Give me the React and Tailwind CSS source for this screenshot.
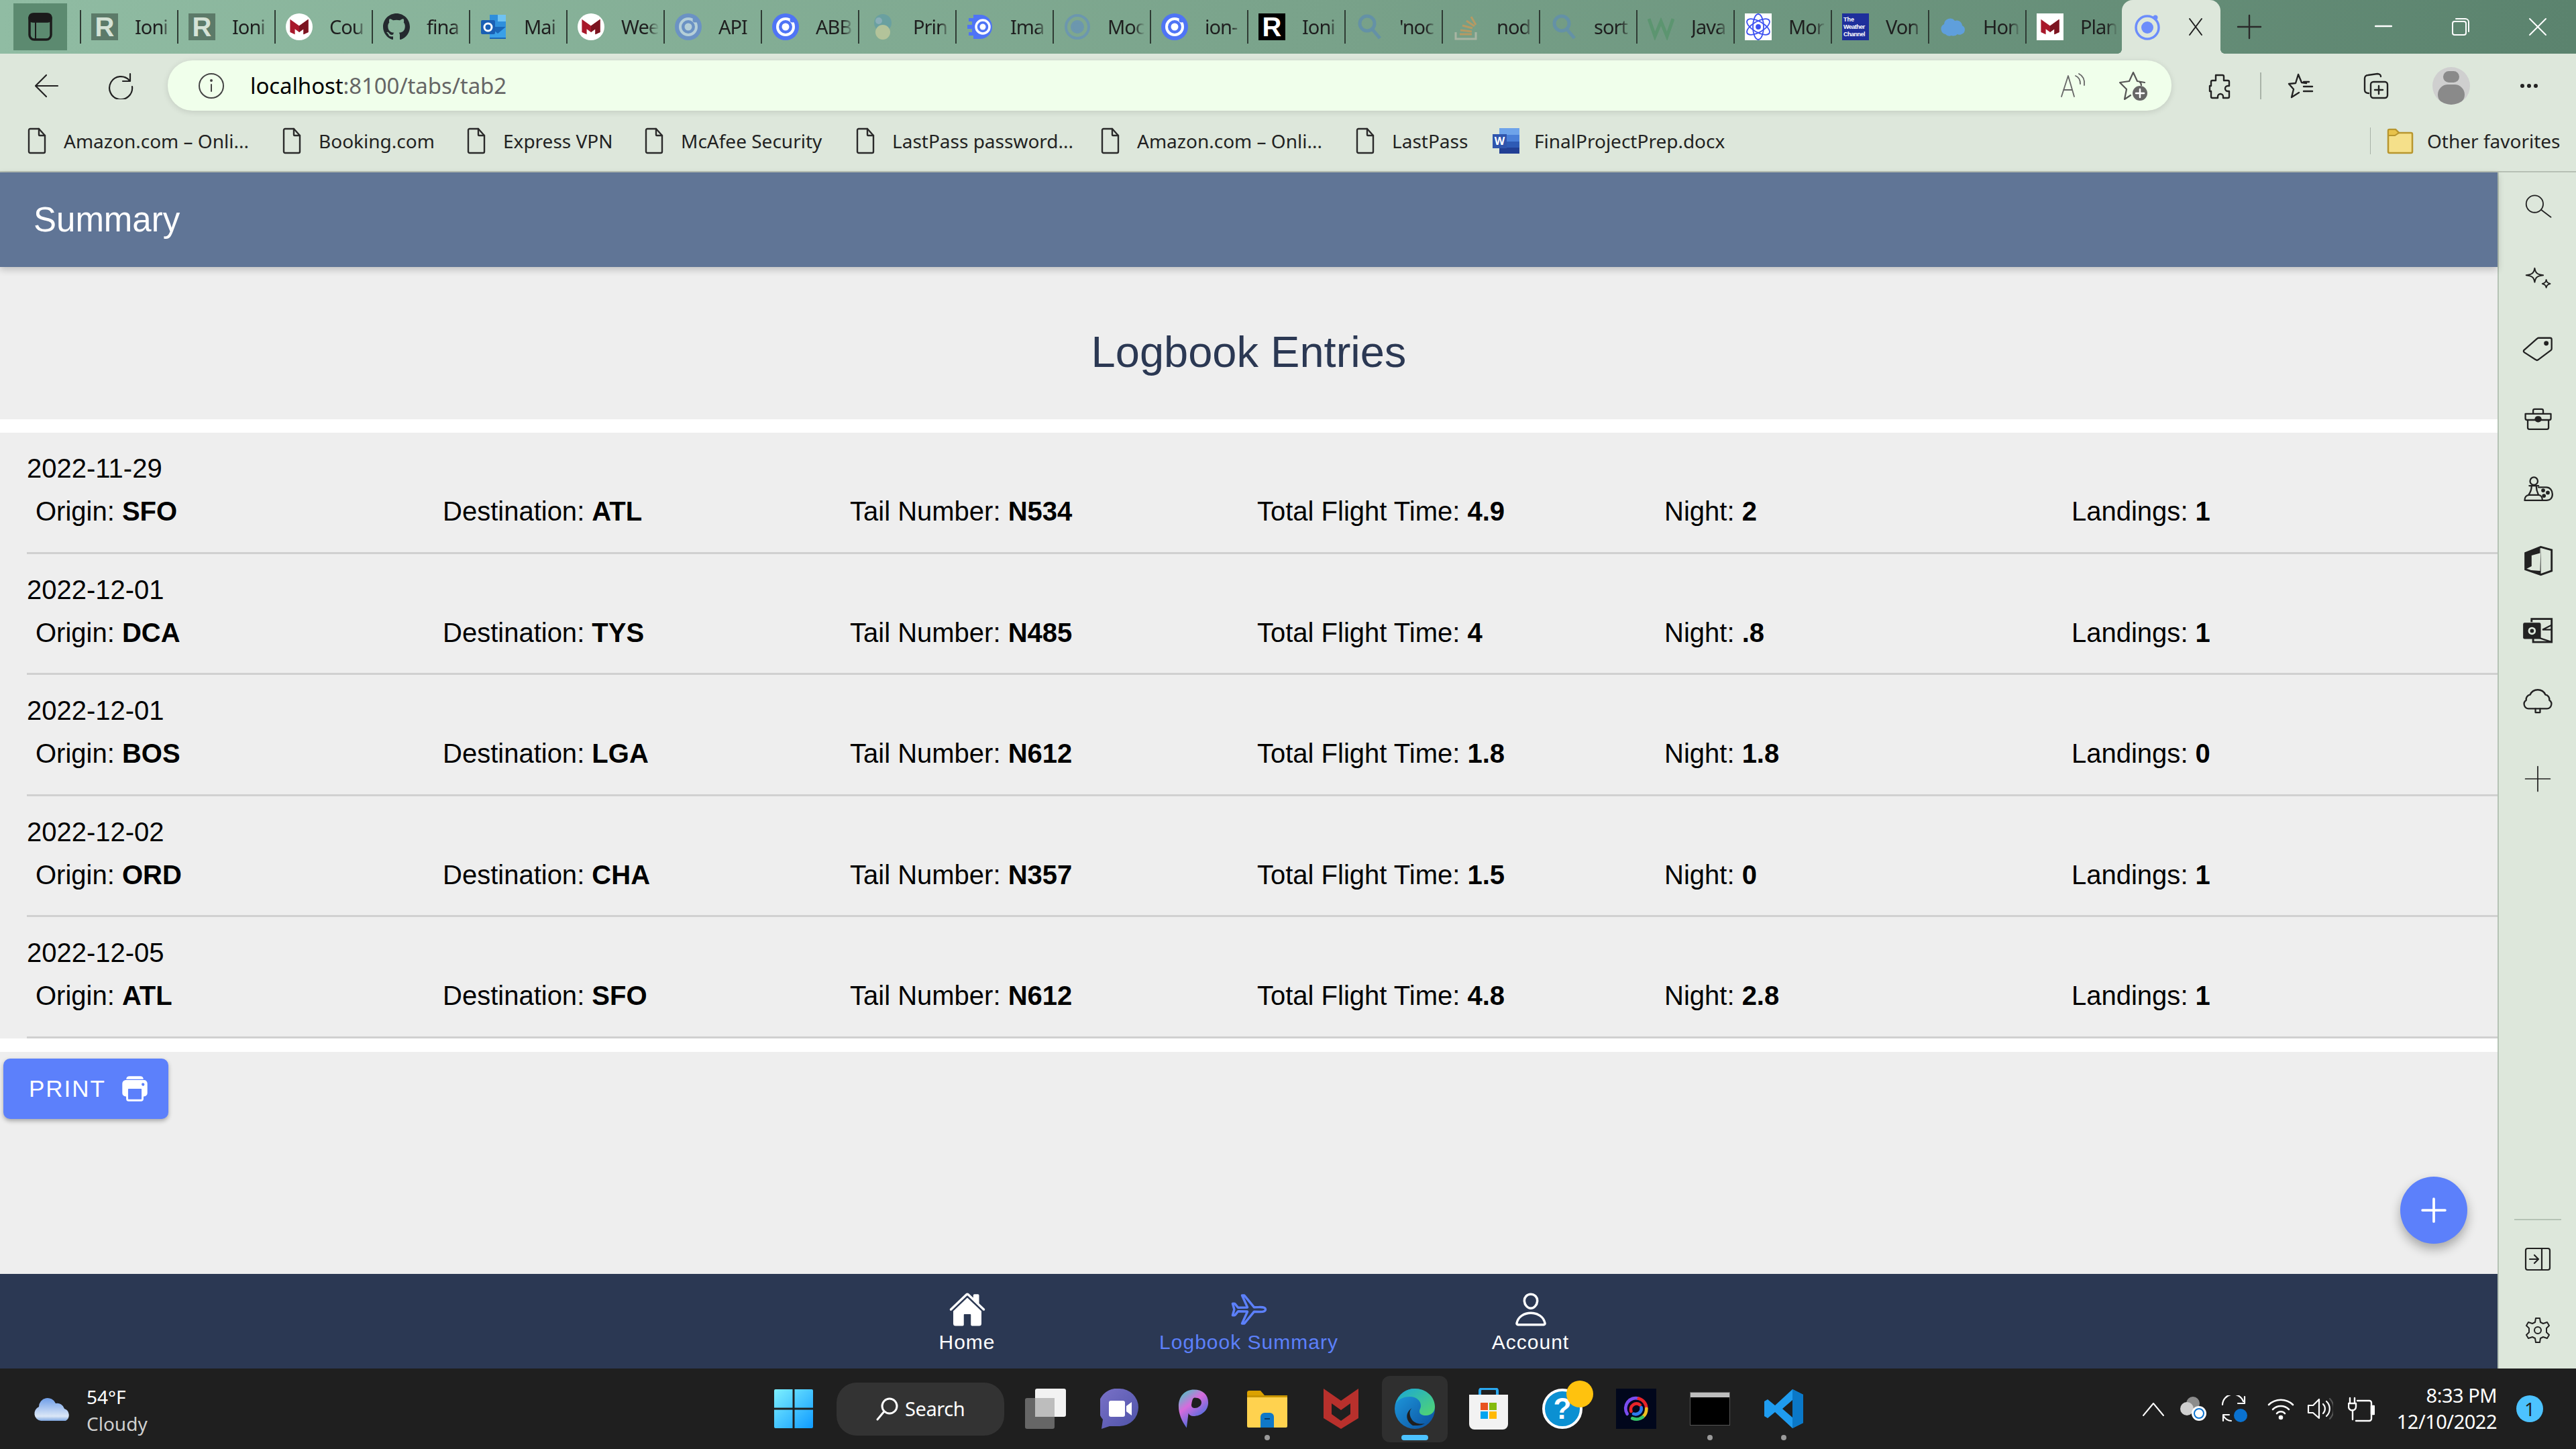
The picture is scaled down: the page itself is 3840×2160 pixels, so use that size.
import React from 'react';
import { IoHome, IoAirplaneOutline, IoPersonOutline, IoPrint, IoAdd } from 'react-icons/io5';

const S = ({ children, className = 'w-10 h-10', sw = 2, vb = '0 0 40 40', stroke = 'currentColor' }) => (
  <svg viewBox={vb} className={className} fill="none" stroke={stroke} strokeWidth={sw} strokeLinecap="round" strokeLinejoin="round">{children}</svg>
);

const RFav = ({ dark }) => (
  <div className={dark ? 'w-10 h-10 bg-black flex items-center justify-center text-white font-black text-[40px] leading-none font-["Liberation_Sans"]' : 'w-10 h-10 bg-[#5c7a69] flex items-center justify-center text-[#d5e2d6] font-black text-[40px] leading-none font-["Liberation_Sans"]'}>R</div>
);
const McAfeeFav = ({ square }) => (
  <div className={square ? 'w-10 h-10 bg-white flex items-center justify-center' : 'w-10 h-10 rounded-full bg-white flex items-center justify-center'}>
    <svg viewBox="0 0 40 40" className="w-8 h-8"><polygon points="3,6 20,18 37,6 37,30 28,34 28,24 20,30 12,24 12,34 3,30" fill="#a8182a" /><polygon points="20,18 37,6 37,30 28,34 28,24 20,30" fill="#7b1420" /></svg>
  </div>
);
const Github = () => (
  <svg viewBox="0 0 16 16" className="w-10 h-10" fill="#24292e"><path d="M8 0C3.58 0 0 3.58 0 8c0 3.54 2.29 6.53 5.47 7.59.4.07.55-.17.55-.38 0-.19-.01-.82-.01-1.49-2.01.37-2.53-.49-2.69-.94-.09-.23-.48-.94-.82-1.13-.28-.15-.68-.52-.01-.53.63-.01 1.08.58 1.23.82.72 1.21 1.87.87 2.33.66.07-.52.28-.87.51-1.07-1.78-.2-3.64-.89-3.64-3.95 0-.87.31-1.59.82-2.15-.08-.2-.36-1.02.08-2.12 0 0 .67-.21 2.2.82.64-.18 1.32-.27 2-.27s1.36.09 2 .27c1.53-1.04 2.2-.82 2.2-.82.44 1.1.16 1.92.08 2.12.51.56.82 1.27.82 2.15 0 3.07-1.87 3.75-3.65 3.95.29.25.54.73.54 1.48 0 1.07-.01 1.93-.01 2.2 0 .21.15.46.55.38A8.01 8.01 0 0 0 16 8c0-4.42-3.58-8-8-8z" /></svg>
);
const OutlookFav = () => (
  <svg viewBox="0 0 40 40" className="w-10 h-10"><rect x="14" y="2" width="24" height="20" fill="#2f8fdc" /><rect x="26" y="2" width="12" height="10" fill="#6fc2f2" /><path d="M14 20 38 20V38H14Z" fill="#1a66b8" /><path d="M14 20 26 30 38 20V36H14Z" fill="#3aa0e8" /><rect x="1" y="10" width="21" height="21" rx="2" fill="#1a5fb4" /><circle cx="11.5" cy="20.5" r="5.5" fill="none" stroke="#fff" strokeWidth="3" /></svg>
);
const Ring = ({ c = '#4f74f5', ring = '#fff' }) => (
  <svg viewBox="0 0 40 40" className="w-10 h-10"><circle cx="20" cy="20" r="20" fill={c} /><circle cx="20" cy="20" r="12" fill="none" stroke={ring} strokeWidth="4" /><circle cx="20" cy="20" r="5.5" fill={ring} /><circle cx="30" cy="10" r="3.5" fill={c} /></svg>
);
const Pic = () => (
  <svg viewBox="0 0 40 40" className="w-10 h-10"><circle cx="20" cy="14" r="13" fill="#6aa0a0" /><circle cx="20" cy="28" r="11" fill="#b3c39a" /><circle cx="14" cy="11" r="5" fill="#8aaeb8" /></svg>
);
const Speed = () => (
  <svg viewBox="0 0 40 40" className="w-10 h-10"><path d="M10 2H20A18 18 0 0 1 20 38H10V33H3V28H8V23H1V17H8V12H3V7H10Z" fill="#4f74f5" /><circle cx="24" cy="20" r="10" fill="none" stroke="#fff" strokeWidth="3.5" /><circle cx="24" cy="20" r="4.5" fill="#fff" /></svg>
);
const Ghost = () => (
  <svg viewBox="0 0 40 40" className="w-10 h-10" fill="none" stroke="#6c97ae" strokeWidth="4"><circle cx="20" cy="20" r="17" /><circle cx="20" cy="20" r="8" fill="#6c97ae" /></svg>
);
const SearchFav = () => (
  <svg viewBox="0 0 40 40" className="w-10 h-10" fill="none" stroke="#6491a6" strokeWidth="5"><circle cx="17" cy="15" r="11" /><path d="M25 24 36 37" /></svg>
);
const SO = () => (
  <svg viewBox="0 0 40 40" className="w-10 h-10" fill="none" stroke="#b69a63" strokeWidth="3"><path d="M4 28V38H34V28" stroke="#a9b5a3" /><path d="M10 31H28M11 25 28 27M14 18 29 22M20 11 32 19M27 5 34 17" /></svg>
);
const Wiki = () => (
  <svg viewBox="0 0 40 40" className="w-10 h-10" fill="none" stroke="#5c9570" strokeWidth="5"><path d="M2 8 11 34 20 12 29 34 38 8" /></svg>
);
const Atom = () => (
  <div className="w-10 h-10 bg-white flex items-center justify-center">
    <svg viewBox="0 0 40 40" className="w-10 h-10" fill="none" stroke="#3c50f0" strokeWidth="1.8"><ellipse cx="20" cy="20" rx="8" ry="19" /><ellipse cx="20" cy="20" rx="8" ry="19" transform="rotate(60 20 20)" /><ellipse cx="20" cy="20" rx="8" ry="19" transform="rotate(120 20 20)" /><circle cx="20" cy="20" r="3" fill="#3c50f0" /></svg>
  </div>
);
const Weather = () => (
  <div className="w-10 h-10 bg-[#1f2f9c] flex flex-col justify-center px-[2px] text-white text-[9px] leading-[11px] font-['Liberation_Sans'] font-bold overflow-hidden"><span>The</span><span className="tracking-[-0.5px]">Weather</span><span className="tracking-[-0.5px]">Channel</span></div>
);
const Cloud = () => (
  <svg viewBox="0 0 40 40" className="w-10 h-10"><path d="M9 31a8 8 0 0 1-2-15 9 9 0 0 1 16-5 8 8 0 0 1 11 7 7 7 0 0 1-1 13 6 6 0 0 1-6 0 9 9 0 0 1-9 2 8 8 0 0 1-9-2Z" fill="#5f9fdc" /></svg>
);

const tabs = [
  ['Ioni', <RFav />], ['Ioni', <RFav />], ['Cou', <McAfeeFav />], ['fina', <Github />], ['Mai', <OutlookFav />], ['Wee', <McAfeeFav />],
  ['API', <Ring c="#6b92c4" ring="#b5cfd8" />], ['ABB', <Ring />], ['Prin', <Pic />], ['Ima', <Speed />], ['Moc', <Ghost />], ['ion-', <Ring />],
  ['Ioni', <RFav dark />], ["'noc", <SearchFav />], ['nod', <SO />], ['sort', <SearchFav />], ['Java', <Wiki />], ['Mor', <Atom />],
  ['Von', <Weather />], ['Hon', <Cloud />], ['Plan', <McAfeeFav square />],
];

const FileIcon = () => (
  <S className="w-[30px] h-10 text-[#2a2a2a]" vb="0 0 30 40" sw={2.4}><path d="M3 4a2 2 0 0 1 2-2h13l9 10v24a2 2 0 0 1-2 2H5a2 2 0 0 1-2-2Z" /><path d="M18 2v9a1 1 0 0 0 1 1h8" /></S>
);

const bookmarks = [
  ['Amazon.com – Onli...', 'w-[380px]', <FileIcon />],
  ['Booking.com', 'w-[275px]', <FileIcon />],
  ['Express VPN', 'w-[265px]', <FileIcon />],
  ['McAfee Security', 'w-[315px]', <FileIcon />],
  ['LastPass password...', 'w-[365px]', <FileIcon />],
  ['Amazon.com – Onli...', 'w-[380px]', <FileIcon />],
  ['LastPass', 'w-[205px]', <FileIcon />],
  ['FinalProjectPrep.docx', 'w-[400px]', (
    <div className="relative w-10 h-10 shrink-0 -mr-[3px]">
      <svg viewBox="0 0 40 40" className="w-10 h-10"><rect x="10" y="1" width="30" height="10" fill="#6ea3ea" /><rect x="10" y="11" width="30" height="10" fill="#4a7fd8" /><rect x="10" y="21" width="30" height="9" fill="#2e5bb5" /><rect x="10" y="30" width="30" height="9" fill="#213f94" /></svg>
      <span className="absolute left-0 top-[10px] w-[21px] h-[21px] bg-[#2f55ad] text-white text-[16px] leading-[21px] text-center font-bold">W</span>
    </div>
  )],
];

const rows = [
  ['2022-11-29', 'SFO', 'ATL', 'N534', '4.9', '2', '1'],
  ['2022-12-01', 'DCA', 'TYS', 'N485', '4', '.8', '1'],
  ['2022-12-01', 'BOS', 'LGA', 'N612', '1.8', '1.8', '0'],
  ['2022-12-02', 'ORD', 'CHA', 'N357', '1.5', '0', '1'],
  ['2022-12-05', 'ATL', 'SFO', 'N612', '4.8', '2.8', '1'],
];
const labels = ['Origin', 'Destination', 'Tail Number', 'Total Flight Time', 'Night', 'Landings'];

const side = [
  <S sw={1.6}><circle cx="16" cy="14" r="11" /><path d="M25 22 37 31" /></S>,
  <S sw={1.8}><path d="M16 6c1 6 3 8 11 9-8 1-10 3-11 9-1-6-3-8-11-9 8-1 10-3 11-9Z" /><path d="M31 21c.5 3 1.500 4 5 5-3.500 1-4.500 2-5 5-.5-3-1.500-4-5-5 3.500-1 4.500-2 5-5Z" /></S>,
  <S sw={2}><path d="M2 21 19 6a3 3 0 0 1 2-1h15a2 2 0 0 1 2 2v12a3 3 0 0 1-1 2L21 33a3 3 0 0 1-4 0L3 24a2 2 0 0 1-1-3Z" /><circle cx="31" cy="12" r="2" fill="currentColor" /></S>,
  <S sw={2}><path d="M4 12h33v6a2 2 0 0 1-2 2H6a2 2 0 0 1-2-2ZM7 20v10a2 2 0 0 0 2 2h23a2 2 0 0 0 2-2V20M14 12V8a2 2 0 0 1 2-2h9a2 2 0 0 1 2 2v4" /><rect x="17" y="16" width="7" height="6" rx="3" fill="currentColor" /></S>,
  <S sw={2}><circle cx="15" cy="8" r="5" /><path d="M9 14h12M12 14c0 5-1 8-4 12M18 14c0 5 1 8 3 12M3 33c0-4 2-7 6-7h12c3 0 5 3 5 7Z" /><path d="M21 16h10c5 0 8 4 8 9s-3 8-8 8h-5" /><circle cx="27" cy="20" r="1.500" fill="currentColor" /><circle cx="33" cy="23" r="1.500" fill="currentColor" /><circle cx="28" cy="27" r="1.500" fill="currentColor" /></S>,
  <svg viewBox="0 0 40 40" className="w-10 h-10"><path d="M24 2 38 6V33L24 38 4 31V10Z" fill="none" stroke="#222" strokeWidth="2.500" /><path d="M23 3 4 10V31L12 27V13L23 10Z" fill="#222" /><path d="M24 2V38L8 32 23 33Z" fill="#222" /><rect x="26" y="7" width="9" height="24" fill="#dde7db" /></svg>,
  <svg viewBox="0 0 40 40" className="w-10 h-10"><path d="M12 8V4H38V34H14V26" fill="none" stroke="#222" strokeWidth="2.500" /><path d="M14 26 38 34M26 18 38 12M26 18H38" fill="none" stroke="#222" strokeWidth="2" /><rect x="1" y="9" width="23" height="21" rx="2" fill="#222" /><circle cx="12.500" cy="19.500" r="5" fill="#dde7db" /><circle cx="12.500" cy="19.500" r="2.500" fill="#222" /></svg>,
  <S sw={2}><path d="M12 29H8a6 6 0 0 1-3-11 6 6 0 0 1 5-7 11 11 0 0 1 20 0 6 6 0 0 1 5 7 6 6 0 0 1-3 11Z" /><path d="M17 29v5h6v-5" /></S>,
];

const TaskIcon = ({ children, active, dot }) => (
  <div className={active ? 'relative w-[98px] h-[99px] mx-[6px] flex items-center justify-center rounded-xl bg-[#2f2f2f]' : 'relative w-[98px] h-[99px] mx-[6px] flex items-center justify-center'}>
    {children}
    {active && <span className="absolute left-[29px] bottom-[3px] w-10 h-2 rounded-full bg-[#4cc2ff]" />}
    {dot && <span className="absolute left-[45px] bottom-[3px] w-2 h-2 rounded-full bg-[#9a9a9a]" />}
  </div>
);

const chromeFont = "font-['Noto_Sans']";

export default function App() {
  return (
    <div className="w-[3840px] h-[2160px] flex flex-col overflow-hidden bg-[#dde7db] font-['Liberation_Sans',sans-serif]">
      {/* tab strip */}
      <div className={"h-20 flex items-center shrink-0 bg-gradient-to-r from-[#90bca3] via-[#7aa38b] to-[#5b836e] " + chromeFont}>
        <div className="ml-5 w-20 h-[70px] flex items-center justify-center bg-[#5c8a70] text-[#1b1b1b]">
          <S className="w-10 h-[44px]" vb="0 0 40 44" sw={3.500}><rect x="4" y="3" width="32" height="38" rx="7" /><rect x="4" y="3" width="32" height="11" rx="5" fill="currentColor" /><path d="M13 14v26" strokeWidth="2" /></S>
        </div>
        <div className="flex ml-[19px]">
          {tabs.map(([t, icon], i) => (
            <div key={i} className="w-[145px] h-20 flex items-center shrink-0">
              <span className="w-[2px] h-[50px] bg-[#2f3b34] shrink-0" />
              <div className="ml-[15px] w-10 h-10 shrink-0 flex">{icon}</div>
              <div className="ml-[25px] w-[56px] whitespace-nowrap text-[29px] text-[#1f1f1f] tracking-[-1px] [mask-image:linear-gradient(90deg,#000_70%,transparent)]">{t}</div>
            </div>
          ))}
        </div>
        <div className="relative w-[147px] h-20 -ml-px bg-[#dde7db] rounded-t-2xl flex items-center shrink-0">
          <span className="absolute -left-[6px] bottom-0 w-[6px] h-[6px] bg-[radial-gradient(circle_at_0_0,transparent_5.500px,#dde7db_6px)]" />
          <span className="absolute -right-[6px] bottom-0 w-[6px] h-[6px] bg-[radial-gradient(circle_at_100%_0,transparent_5.500px,#dde7db_6px)]" />
          <svg viewBox="0 0 40 40" className="ml-[18px] w-10 h-10 shrink-0" fill="none"><circle cx="20" cy="21" r="17" stroke="#6c8dfb" strokeWidth="3.500" /><circle cx="20" cy="21" r="9" fill="#6c8dfb" /><circle cx="32" cy="6" r="3.500" fill="#6c8dfb" /></svg>
          <S className="ml-[41px] w-[22px] h-[28px] text-[#1f1f1f] shrink-0" vb="0 0 22 28" sw={2}><path d="M2 2 20 26M20 2 2 26" /></S>
        </div>
        <div className="w-[86px] flex justify-center text-[#2a2a2a]">
          <S className="w-[38px] h-[38px]" vb="0 0 38 38" sw={2.400}><path d="M19 2v34M2 19h34" /></S>
        </div>
        <div className="ml-auto flex text-white">
          <div className="w-[115px] flex justify-center"><S className="w-[26px] h-[26px]" vb="0 0 26 26" sw={2.400}><path d="M1 13h24" /></S></div>
          <div className="w-[115px] flex justify-center"><S className="w-[28px] h-[28px]" vb="0 0 28 28" sw={2}><rect x="2" y="6" width="20" height="20" rx="3" /><path d="M7 2h14a5 5 0 0 1 5 5v14" /></S></div>
          <div className="w-[115px] flex justify-center"><S className="w-[28px] h-[28px]" vb="0 0 28 28" sw={2}><path d="M2 2 26 26M26 2 2 26" /></S></div>
        </div>
      </div>

      {/* toolbar */}
      <div className={"h-[95px] flex items-center shrink-0 bg-[#dde7db] text-[#222] " + chromeFont}>
        <div className="ml-[15px] w-[110px] flex justify-center"><S sw={2.200}><path d="M36 20H4M19 4 3 20l16 16" /></S></div>
        <div className="w-[110px] flex justify-center"><S sw={2.200}><path d="M33 12A17 17 0 1 0 37 21" /><path d="M34 2v11H23" /></S></div>
        <div className="ml-[15px] w-[2987px] h-[75px] rounded-[37px] bg-[#f0ffeb] shadow-[0_2px_10px_rgba(0,0,0,0.12)] flex items-center pl-[45px] pr-[34px]">
          <S className="w-10 h-10 text-[#444]" sw={2}><circle cx="20" cy="20" r="18" /><path d="M20 18v10" /><circle cx="20" cy="12" r="1" fill="currentColor" /></S>
          <div className="ml-[38px] flex-1 text-[33px] text-[#666] tracking-[-0.1px]"><span className="text-black">localhost</span>:8100/tabs/tab2</div>
          <S className="w-10 h-10 text-[#666]" sw={1.800}><path d="M3 36 13 5l9 31M6 26h13M24 5c5 2 7 6 7 12M29 2c6 3 9 9 8 17" /></S>
          <S className="ml-[47px] w-[46px] h-[46px] text-[#555]" vb="0 0 46 46" sw={2.200}><path d="M35 22l-1-4-1 0M40 18l-11-2-6-13-6 13-14 2 10 10-3 15 9-6" /><circle cx="33" cy="34" r="11" fill="#666" stroke="none" /><path d="M33 28v12M27 34h12" stroke="#fff" strokeWidth="2.500" /></S>
        </div>
        <div className="ml-4 w-[112px] flex justify-center"><S sw={2.400}><path d="M14 4h10a2 2 0 0 1 2 2v6h6a2 2 0 0 1 2 2v6h-2a4 4 0 0 0 0 8h2v8a2 2 0 0 1-2 2h-7v-2a4 4 0 0 0-8 0v2H9a2 2 0 0 1-2-2v-8H5v-8h2v-6a2 2 0 0 1 2-2h5Z" /></S></div>
        <span className="ml-1 w-[2px] h-10 bg-[#a9b3a8]" />
        <div className="ml-1 w-[110px] flex justify-center"><S sw={2.400}><path d="M16 3l5 12 7 1M6 37l3-12-7-8 10-1 4-13M24 21h13M24 28h13M24 14h8M6 37l11-7" /></S></div>
        <div className="ml-px w-[110px] flex justify-center"><S sw={2.400}><path d="M10 31c-4 0-6-2-6-5V9c0-3 2-5 5-5l14-2c3 0 5 2 5 4" /><rect x="13" y="14" width="25" height="24" rx="4" /><path d="M25 20v12M19 26h12" /></S></div>
        <div className="ml-[3px] w-[110px] flex justify-center">
          <div className="w-14 h-14 rounded-full bg-[#cfcfcf] flex flex-col items-center overflow-hidden">
            <span className="mt-[6px] w-6 h-6 rounded-full bg-[#8a8a8a]" />
            <span className="mt-[3px] w-10 h-10 rounded-full bg-[#8a8a8a]" />
          </div>
        </div>
        <div className="ml-[6px] w-[110px] flex justify-center gap-[4px]"><span className="w-[6px] h-[6px] rounded-full bg-[#222]" /><span className="w-[6px] h-[6px] rounded-full bg-[#222]" /><span className="w-[6px] h-[6px] rounded-full bg-[#222]" /></div>
      </div>

      {/* bookmarks */}
      <div className={"h-[82px] flex items-center shrink-0 pb-[10px] pl-10 bg-[#dde7db] border-b-2 border-[#b7c0b5] text-[#222] " + chromeFont}>
        {bookmarks.map(([t, w, icon], i) => (
          <div key={i} className={w + ' flex items-center gap-[25px] shrink-0'}>
            {icon}
            <span className="text-[28px] whitespace-nowrap">{t}</span>
          </div>
        ))}
        <span className="ml-[908px] w-px h-10 bg-[#a9b3a8]" />
        <svg viewBox="0 0 40 40" className="ml-[24px] w-10 h-10"><path d="M2 5a2 2 0 0 1 2-2h9l5 5h18a2 2 0 0 1 2 2v26a2 2 0 0 1-2 2H4a2 2 0 0 1-2-2Z" fill="#f5e08a" stroke="#b8962e" strokeWidth="2.500" /><path d="M2 12V5a2 2 0 0 1 2-2h9l5 5-6 4Z" fill="#e8c24a" stroke="#b8962e" strokeWidth="2" /></svg>
        <span className="ml-5 text-[28px] whitespace-nowrap">Other favorites</span>
      </div>

      <div className="flex-1 flex min-h-0">
        <div className="w-[3723px] flex flex-col">
          {/* header */}
          <div className="h-[141px] shrink-0 bg-[#607596] flex items-center pl-[50px] pt-[2px] text-white text-[51px] shadow-[0_4px_10px_rgba(0,0,0,0.2)] relative z-10">Summary</div>
          {/* content */}
          <div className="relative flex-1 bg-[#eeeeee]">
            <div className="h-[227px] pt-[26px] flex items-center justify-center text-[65px] text-[#2b3853]">Logbook Entries</div>
            <div className="h-5 bg-white" />
            {rows.map((r, i) => (
              <div key={i} className="h-[180.6px] ml-10 border-b-[3px] border-[#d0d0d0] text-black text-[40px] leading-[46px] pt-[30px]">
                <div>{r[0]}</div>
                <div className="mt-[18px] grid grid-cols-6 w-[3642px]">
                  {labels.map((l, j) => (
                    <div key={l} className="pl-[13px]">{l}: <b>{r[j + 1]}</b></div>
                  ))}
                </div>
              </div>
            ))}
            <div className="h-5 bg-white" />
            <button className="mt-[10px] ml-[5px] w-[246px] h-[90px] rounded-[10px] bg-[#5c80fb] text-white flex items-center pl-[38px] gap-[20px] text-[35px] tracking-[2px] shadow-[0_3px_6px_rgba(0,0,0,0.3)]">
              PRINT<IoPrint className="w-[46px] h-[46px]" />
            </button>
            <div className="absolute left-[3578px] top-[1356px] w-[100px] h-[100px] rounded-full bg-[#5c80fb] text-white flex items-center justify-center shadow-[0_8px_16px_rgba(0,0,0,0.3)]">
              <IoAdd className="w-[60px] h-[60px]" />
            </div>
          </div>
          {/* tab bar */}
          <div className="h-[141px] shrink-0 bg-[#2b3853] flex justify-center text-white text-[30px] tracking-[1px]">
            {[['Home', <IoHome className="w-[56px] h-[56px]" />, 'text-white'], ['Logbook Summary', <IoAirplaneOutline className="w-[56px] h-[56px]" />, 'text-[#5c80fb]'], ['Account', <IoPersonOutline className="w-[56px] h-[56px]" />, 'text-white']].map(([t, ic, c]) => (
              <div key={t} className={'w-[420px] flex flex-col items-center pt-[25px] ' + c}>
                {ic}
                <span className="leading-[34px] mt-[4px]">{t}</span>
              </div>
            ))}
          </div>
        </div>
        {/* sidebar */}
        <div className="flex-1 border-l-2 border-[#b5c3b5] bg-[#dde7db] flex flex-col items-center text-[#222]">
          <div className="pt-[31px] flex flex-col items-center gap-[59px]">
            {side.map((ic, i) => <div key={i} className="w-[46px] h-[46px] [&>svg]:w-full [&>svg]:h-full">{ic}</div>)}
          </div>
          <div className="mt-[69px] w-[46px] h-[46px] [&>svg]:w-full [&>svg]:h-full"><S sw={1.500}><path d="M20 4v32M4 20h32" /></S></div>
          <div className="mt-auto w-[70px] h-[2px] bg-[#b5c3b5]" />
          <div className="mt-[38px] w-10 h-10"><S sw={2.200}><rect x="2" y="4" width="36" height="32" rx="3" /><path d="M26 4v32M8 20h12M15 14l6 6-6 6" /></S></div>
          <div className="mt-[66px] mb-[37px] w-10 h-10"><S sw={2}><circle cx="20" cy="20" r="5" /><path d="M17 2h6l1 6 4 2 6-2 3 5-4 4v6l4 4-3 5-6-2-4 2-1 6h-6l-1-6-4-2-6 2-3-5 4-4v-6L3 13l3-5 6 2 4-2Z" /></S></div>
        </div>
      </div>

      {/* taskbar */}
      <div className={"h-[120px] shrink-0 bg-[#1f1f1f] flex items-center text-white relative " + chromeFont}>
        <svg viewBox="0 0 60 40" className="ml-[48px] w-[62px] h-10 shrink-0"><defs><linearGradient id="cl" x1="0" y1="0" x2="0" y2="1"><stop offset="0" stopColor="#6f9ee8" /><stop offset="0.8" stopColor="#dbe7f7" /><stop offset="1" stopColor="#7ea6e0" /></linearGradient></defs><path d="M12 38a11 11 0 0 1-3-21 13 13 0 0 1 25-5 11 11 0 0 1 13 8 10 10 0 0 1 2 18Z" fill="url(#cl)" /></svg>
        <div className="ml-[19px] w-[100px] pt-[3px] flex flex-col shrink-0">
          <span className="text-[28px] leading-[40px]">54°F</span>
          <span className="text-[28px] leading-[40px] text-[#cfcfcf]">Cloudy</span>
        </div>
        <svg viewBox="0 0 58 58" className="ml-[925px] w-[58px] h-[58px] shrink-0"><defs><linearGradient id="w" x1="0" y1="0" x2="1" y2="1"><stop offset="0" stopColor="#7df0ff" /><stop offset="1" stopColor="#0f9bff" /></linearGradient></defs><path d="M0 2a2 2 0 0 1 2-2h25.500v27.500H0ZM30.500 0H56a2 2 0 0 1 2 2v25.500H30.500ZM0 30.500h27.500V58H2a2 2 0 0 1-2-2ZM30.500 30.500H58V56a2 2 0 0 1-2 2H30.500Z" fill="url(#w)" /></svg>
        <div className="ml-[35px] w-[250px] h-[79px] rounded-[30px] bg-[#333333] flex items-center pl-[58px] gap-[8px] shrink-0">
          <S className="w-[36px] h-[36px]" vb="0 0 36 36" sw={3}><circle cx="21" cy="14" r="11" /><path d="M13 22 3 34" /></S>
          <span className="text-[29px] tracking-[-0.4px]">Search</span>
        </div>
        <div className="ml-[7px] flex">
          <TaskIcon><svg viewBox="0 0 62 62" className="w-[62px] h-[62px]"><rect x="0" y="15" width="44" height="46" rx="3" fill="#666" /><rect x="15" y="1" width="46" height="42" rx="3" fill="#f2f2f2" /><rect x="15" y="15" width="29" height="28" fill="#bdbdbd" /></svg></TaskIcon>
          <TaskIcon><svg viewBox="0 0 58 60" className="w-[58px] h-[60px]"><defs><linearGradient id="mt" x1="0" y1="0" x2="1" y2="1"><stop offset="0" stopColor="#7a72c8" /><stop offset="1" stopColor="#4e52a8" /></linearGradient></defs><path d="M29 0a28 28 0 0 1 0 56H14L2 60l2-14A28 28 0 0 1 29 0Z" fill="url(#mt)" /><rect x="13" y="18" width="24" height="24" rx="3" fill="#fff" /><path d="M39 26l8-6v20l-8-6Z" fill="#fff" /></svg></TaskIcon>
          <TaskIcon><svg viewBox="0 0 50 64" className="w-[46px] h-[64px]"><defs><linearGradient id="pp" x1="0" y1="0" x2="0.6" y2="1"><stop offset="0" stopColor="#33d6c0" /><stop offset="0.45" stopColor="#d76bdc" /><stop offset="1" stopColor="#2a6fe0" /></linearGradient></defs><path d="M26 1c14 0 23 8 23 21S38 44 25 44c-4 0-7-2-8-5l-3 24C6 52 1 40 1 28 1 12 11 1 26 1Z" fill="url(#pp)" /><path d="M27 14c7 0 11 3 11 8s-5 9-11 9c-4 0-6-3-5-7 1-5 2-10 5-10Z" fill="#1f1f1f" /></svg></TaskIcon>
          <TaskIcon dot><svg viewBox="0 0 60 56" className="w-[60px] h-[56px]"><path d="M0 4a3 3 0 0 1 3-3h17l6 7v4H0Z" fill="#dba100" /><rect x="0" y="8" width="60" height="48" rx="2" fill="#ffd24f" /><rect x="0" y="8" width="60" height="3" fill="#c89400" /><path d="M20 40a6 6 0 0 1 6-6h8a6 6 0 0 1 6 6v16H20Z" fill="#0f78c8" /><rect x="26" y="42" width="8" height="2" fill="#073a66" /></svg></TaskIcon>
          <TaskIcon><svg viewBox="0 0 52 60" className="w-[52px] h-[60px]"><path d="M0 0 26 18 52 0V44L26 60 0 44ZM12 22V38L26 48 40 38V22L26 32Z" fill="#b8302c" fillRule="evenodd" /></svg></TaskIcon>
          <TaskIcon active><svg viewBox="0 0 60 60" className="w-[60px] h-[60px]"><defs><linearGradient id="e1" x1="0" y1="0" x2="1" y2="1"><stop offset="0" stopColor="#1aa7d8" /><stop offset="1" stopColor="#53d66e" /></linearGradient><linearGradient id="e2" x1="0" y1="0" x2="1" y2="1"><stop offset="0" stopColor="#1f9de0" /><stop offset="1" stopColor="#0b4f9e" /></linearGradient></defs><circle cx="30" cy="30" r="30" fill="url(#e2)" /><path d="M2 22C6 8 17 0 30 0c17 0 30 12 30 27 0 8-6 13-13 13-6 0-10-2-10-6 0-4 2-4 2-9 0-7-7-13-16-13C14 12 6 15 2 22Z" fill="url(#e1)" /><path d="M27 28c-5 3-6 10-2 17 3 6 12 9 20 7-3 2-7 3-12 3-6 0-6 0-6 0C16 48 15 35 27 28Z" fill="#1f1f1f" /></svg></TaskIcon>
          <TaskIcon><svg viewBox="0 0 58 62" className="w-[58px] h-[62px]"><path d="M16 10V4a3 3 0 0 1 3-3h20a3 3 0 0 1 3 3v6" fill="none" stroke="#2aa8f0" strokeWidth="4" /><path d="M0 10h58v44a8 8 0 0 1-8 8H8a8 8 0 0 1-8-8Z" fill="#f2f2f2" /><rect x="17" y="22" width="11" height="11" fill="#e8531f" /><rect x="30" y="22" width="11" height="11" fill="#84bb0d" /><rect x="17" y="35" width="11" height="11" fill="#03a4ef" /><rect x="30" y="35" width="11" height="11" fill="#ffb902" /></svg></TaskIcon>
          <TaskIcon>
            <div className="relative w-[60px] h-[60px] rounded-full bg-[#0b90d2] border-[4px] border-white flex items-center justify-center text-white font-bold text-[44px] leading-none font-['Liberation_Sans']">?
              <span className="absolute -top-[16px] left-[32px] w-10 h-10 rounded-full bg-[#ffc20e]" />
            </div>
          </TaskIcon>
          <TaskIcon><div className="w-[60px] h-[60px] bg-[#01071c] flex items-center justify-center"><svg viewBox="0 0 44 44" className="w-[42px] h-[42px]" fill="none" strokeWidth="5" strokeLinecap="round"><path d="M8 30A16 16 0 0 1 26 6" stroke="#7a4cf0" /><path d="M26 6A16 16 0 0 1 38 22" stroke="#e8242a" /><path d="M38 22A16 16 0 0 1 32 35" stroke="#f0c020" /><path d="M32 35A16 16 0 0 1 16 37" stroke="#35c46a" /><path d="M14 26A9 9 0 0 1 28 16" stroke="#e8242a" /><path d="M30 20A9 9 0 0 1 18 30" stroke="#2f7af0" /></svg></div></TaskIcon>
          <TaskIcon dot><div className="w-[60px] h-[50px] bg-black border border-[#555] flex flex-col"><span className="h-[7px] bg-[#bdbdbd]" /></div></TaskIcon>
          <TaskIcon dot><svg viewBox="0 0 60 60" className="w-[60px] h-[60px]"><path d="M43 1 59 9V51L43 59 17 35 6 44 1 41V19L6 16 17 25ZM43 17 28 30 43 43Z" fill="#1f9cf0" fillRule="evenodd" /><path d="M43 1 59 9V51L43 59Z" fill="#0a78c8" /></svg></TaskIcon>
        </div>
        <div className="absolute left-[3190px] top-0 h-full flex items-center text-white">
          <S className="w-10 h-10" vb="0 0 40 40" sw={2}><path d="M5 30 20 12l15 18" /></S>
          <svg viewBox="0 0 40 40" className="ml-[19px] w-10 h-10"><circle cx="20" cy="12" r="10" fill="#8c8c8c" /><circle cx="11" cy="20" r="10" fill="#cfcfcf" /><circle cx="29" cy="27" r="11" fill="#fff" /><circle cx="29" cy="27" r="7" fill="none" stroke="#0a72d0" strokeWidth="2" /></svg>
          <div className="ml-[21px] w-10 h-10 relative"><S sw={2.200}><path d="M3 14A16 16 0 0 1 34 9M36 2v10H26M4 38v-9h9M4 30c3 5 7 8 12 8" /></S><span className="absolute left-[20px] top-[20px] w-5 h-5 rounded-full bg-[#0a72d0]" /></div>
          <S className="ml-[30px] w-10 h-10" sw={2.600}><path d="M2 14a26 26 0 0 1 36 0M8 21a17 17 0 0 1 24 0M14 27a8 8 0 0 1 12 0" /><circle cx="20" cy="33" r="2" fill="currentColor" /></S>
          <S className="ml-[18px] w-10 h-10" sw={2.200}><path d="M3 15h7l9-9v28l-9-8H3Z" /><path d="M25 13a10 10 0 0 1 0 14M30 9a15 15 0 0 1 0 22" /><path d="M35 5a22 22 0 0 1 0 30" stroke="#555" /></S>
          <S className="ml-[22px] w-10 h-10" sw={2.400}><path d="M3 4v8M10 4v8M1 12h11v5a5 5 0 0 1-11 0ZM7 22v14" /><path d="M14 8h18a3 3 0 0 1 3 3v24a3 3 0 0 1-3 3H12" /><rect x="35" y="16" width="4" height="12" fill="currentColor" /></S>
        </div>
        <div className="absolute right-[118px] top-[20px] flex flex-col items-end text-[29px] leading-[39px] tracking-[-0.5px]">
          <span>8:33 PM</span>
          <span>12/10/2022</span>
        </div>
        <div className="absolute left-[3751px] top-[40px] w-10 h-10 rounded-full bg-[#4cc2ff] text-[#1f1f1f] flex items-center justify-center text-[28px]">1</div>
      </div>
    </div>
  );
}
